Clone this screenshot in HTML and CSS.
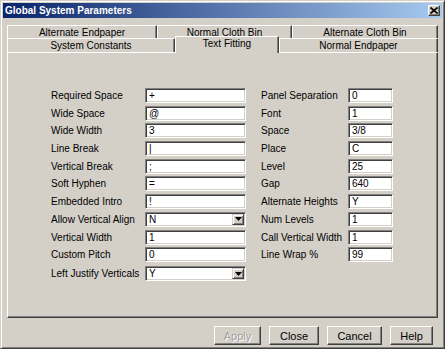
FILE: index.html
```html
<!DOCTYPE html>
<html lang="en">
<head>
    <meta charset="UTF-8">
    <title>Global System Parameters</title>
    <link rel="stylesheet" href="styles.css">
</head>
<body>
    <div class="window">
        <div class="titlebar">
            <span class="title">Global System Parameters</span>
            <div class="title-close">
                <svg width="8" height="7" viewBox="0 0 8 7"><path d="M0.5 0.5 L7.5 6.5 M7.5 0.5 L0.5 6.5" stroke="#000" stroke-width="1.6"/></svg>
            </div>
        </div>

        <!-- Tab strip: back row, then front row touching the panel -->
        <div class="tabs">
            <div class="tab-row back">
                <div class="tab w150">Alternate Endpaper</div>
                <div class="tab w135">Normal Cloth Bin</div>
                <div class="tab w146">Alternate Cloth Bin</div>
            </div>
            <div class="tab-row front">
                <div class="tab w168">System Constants</div>
                <div class="tab w104 selected">Text Fitting</div>
                <div class="tab w159">Normal Endpaper</div>
            </div>
        </div>

        <div class="panel">
            <div class="col col-left">
                <div class="row"><span class="lbl">Required Space</span><div class="field">+</div></div>
                <div class="row"><span class="lbl">Wide Space</span><div class="field">@</div></div>
                <div class="row"><span class="lbl">Wide Width</span><div class="field">3</div></div>
                <div class="row"><span class="lbl">Line Break</span><div class="field">|</div></div>
                <div class="row"><span class="lbl">Vertical Break</span><div class="field">;</div></div>
                <div class="row"><span class="lbl">Soft Hyphen</span><div class="field">=</div></div>
                <div class="row"><span class="lbl">Embedded Intro</span><div class="field">!</div></div>
                <div class="row"><span class="lbl">Allow Vertical Align</span>
                    <div class="field combo"><span>N</span>
                        <div class="drop"><svg width="7" height="4" viewBox="0 0 7 4"><polygon points="0,0 7,0 3.5,4" fill="#000"/></svg></div>
                    </div>
                </div>
                <div class="row"><span class="lbl">Vertical Width</span><div class="field">1</div></div>
                <div class="row"><span class="lbl">Custom Pitch</span><div class="field">0</div></div>
                <div class="row row-last"><span class="lbl">Left Justify Verticals</span>
                    <div class="field combo"><span>Y</span>
                        <div class="drop"><svg width="7" height="4" viewBox="0 0 7 4"><polygon points="0,0 7,0 3.5,4" fill="#000"/></svg></div>
                    </div>
                </div>
            </div>

            <div class="col col-right">
                <div class="row"><span class="lbl">Panel Separation</span><div class="field">0</div></div>
                <div class="row"><span class="lbl">Font</span><div class="field">1</div></div>
                <div class="row"><span class="lbl">Space</span><div class="field">3/8</div></div>
                <div class="row"><span class="lbl">Place</span><div class="field">C</div></div>
                <div class="row"><span class="lbl">Level</span><div class="field">25</div></div>
                <div class="row"><span class="lbl">Gap</span><div class="field">640</div></div>
                <div class="row"><span class="lbl">Alternate Heights</span><div class="field">Y</div></div>
                <div class="row"><span class="lbl">Num Levels</span><div class="field">1</div></div>
                <div class="row"><span class="lbl">Call Vertical Width</span><div class="field">1</div></div>
                <div class="row"><span class="lbl">Line Wrap %</span><div class="field">99</div></div>
            </div>
        </div>

        <div class="buttons">
            <button class="btn btn-apply" disabled>Apply</button>
            <button class="btn btn-close">Close</button>
            <button class="btn btn-cancel">Cancel</button>
            <button class="btn btn-help">Help</button>
        </div>
    </div>
</body>
</html>
```

FILE: styles.css
```css
/* Base */
body {
    margin: 0;
    background: #d4d0c8;
    font-family: "Liberation Sans", Arial, sans-serif;
    font-size: 10px;
    color: #000;
}

/* Dialog frame */
.window {
    width: 445px;
    height: 349px;
    box-sizing: border-box;
    border: 1px solid;
    border-color: #d4d0c8 #404040 #404040 #d4d0c8;
    box-shadow: inset 1px 1px #fff, inset -1px -1px #808080;
    padding: 2px;
    display: flex;
    flex-direction: column;
}

.titlebar {
    height: 15px;
    display: flex;
    align-items: center;
    justify-content: space-between;
    padding: 0 2px;
    background: linear-gradient(to right, #0a246a, #a6caf0);
}

.title {
    color: #fff;
    font-weight: bold;
    font-size: 10px;
}

.title-close {
    width: 12px;
    height: 11px;
    box-sizing: border-box;
    background: #d4d0c8;
    border: 1px solid;
    border-color: #fff #404040 #404040 #fff;
    box-shadow: inset -1px -1px #808080;
    display: flex;
    align-items: center;
    justify-content: center;
}

/* Tabs */
.tabs {
    margin: 7px 4px 0 4px;
}

.tab-row {
    display: flex;
}

.tab-row.back { height: 13px; }
.tab-row.front { height: 14px; }

.tab {
    box-sizing: border-box;
    border-top: 1px solid #fff;
    border-left: 1px solid #fff;
    border-right: 1px solid #404040;
    box-shadow: inset -1px 0 #808080;
    background: #d4d0c8;
    text-align: center;
    line-height: 12px;
    padding-top: 1px;
    white-space: nowrap;
    overflow: hidden;
}

.w150 { width: 150px; }
.w135 { width: 135px; }
.w146 { width: 146px; }
.w168 { width: 168px; }
.w104 { width: 104px; }
.w159 { width: 159px; }

.tab.selected {
    position: relative;
    z-index: 1;
    margin-top: -2px;
    margin-bottom: -1px;
    padding-top: 1px;
}

/* Page panel */
.panel {
    margin: 0 4px;
    height: 266px;
    box-sizing: border-box;
    border: 1px solid;
    border-color: #fff #404040 #404040 #fff;
    box-shadow: inset -1px -1px #808080;
    padding: 35px 0 0 43px;
    display: flex;
    align-items: flex-start;
}

.col {
    display: flex;
    flex-direction: column;
}

.col-right {
    margin-left: 15px;
}

.row {
    display: flex;
    align-items: center;
    height: 15px;
    margin-bottom: 2.7px;
}

.row-last {
    margin-top: 1.6px;
}

.col-left .lbl { width: 94px; }
.col-right .lbl { width: 87px; }

.lbl {
    white-space: nowrap;
}

.field {
    box-sizing: border-box;
    height: 15px;
    background: #fff;
    border: 1px solid;
    border-color: #808080 #fff #fff #808080;
    box-shadow: inset 1px 1px #404040, inset -1px -1px #d4d0c8;
    padding: 0 3px;
    line-height: 13px;
    white-space: nowrap;
}

.col-left .field { width: 101px; }
.col-right .field { width: 45px; }

.combo {
    display: flex;
    align-items: center;
    justify-content: space-between;
    padding-right: 1px;
}

.drop {
    width: 12px;
    height: 11px;
    box-sizing: border-box;
    background: #d4d0c8;
    border: 1px solid;
    border-color: #d4d0c8 #404040 #404040 #d4d0c8;
    box-shadow: inset 1px 1px #fff, inset -1px -1px #808080;
    display: flex;
    align-items: center;
    justify-content: center;
}

/* Dialog buttons */
.buttons {
    display: flex;
    justify-content: flex-end;
    gap: 8px;
    margin-top: 8px;
    padding-right: 9px;
}

.btn {
    height: 19px;
    box-sizing: border-box;
    background: #d4d0c8;
    border: 1px solid;
    border-color: #fff #404040 #404040 #fff;
    box-shadow: inset -1px -1px #808080;
    font-family: "Liberation Sans", Arial, sans-serif;
    font-size: 11px;
    color: #000;
    padding: 0;
}

.btn:disabled {
    color: #a0a0a0;
    text-shadow: 1px 1px #fff;
}

.btn-apply { width: 47px; }
.btn-close { width: 50px; }
.btn-cancel { width: 55px; }
.btn-help { width: 43px; }
```
